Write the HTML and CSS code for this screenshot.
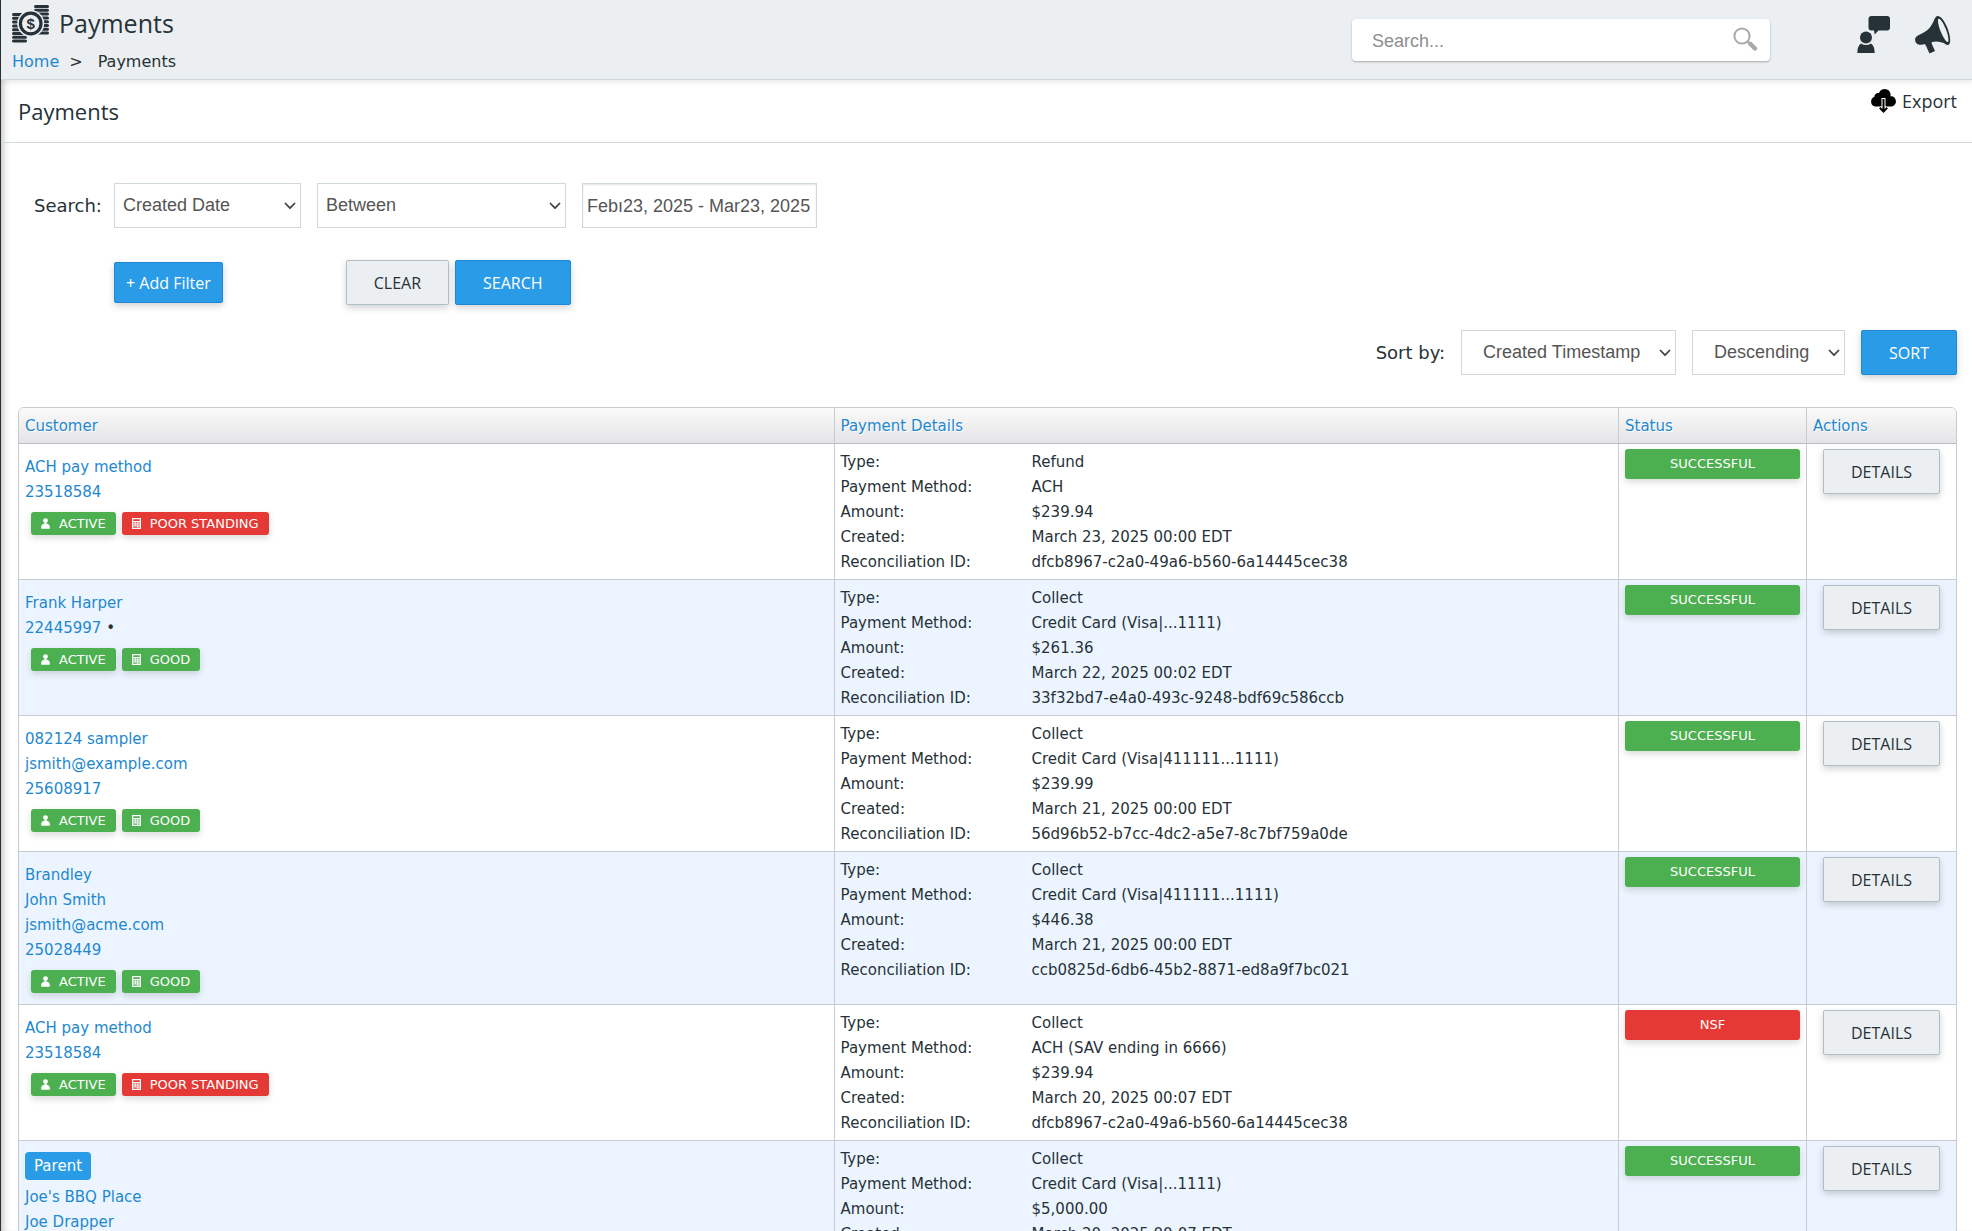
FILE: index.html
```html
<!DOCTYPE html>
<html lang="en">
<head>
    <meta charset="UTF-8">
    <meta name="viewport" content="width=device-width, initial-scale=1.0">
    <title>Payments</title>
    <link rel="stylesheet" href="styles.css">
</head>
<body>
    <!-- Shared icons -->
    <svg class="sprite" aria-hidden="true">
        <symbol id="icon-user" viewBox="0 0 9 11">
            <circle cx="4.5" cy="2.6" r="2.4"/>
            <path d="M3.4 4.5h2.2v1.2c2 .3 3.2 1.400 3.200 3v1.500q0 .6-.6.6H.8q-.6 0-.6-.6V8.700c0-1.600 1.200-2.700 3.200-3z"/>
        </symbol>
        <symbol id="icon-calc" viewBox="0 0 9 11">
            <path fill-rule="evenodd" d="M.5 0h8q.5 0 .5.500v10q0 .5-.5.5h-8q-.5 0-.5-.5V.5Q0 0 .5 0zM1.200 1.200v1.800h6.600V1.200zM1.200 4.200v1.200h1.600V4.200zM3.700 4.200v1.200h1.600V4.200zM6.200 4.200v1.200h1.600V4.200zM1.200 6.400v1.200h1.600V6.400zM3.700 6.400v1.200h1.600V6.400zM6.200 6.400v1.200h1.600V6.400zM1.200 8.600v1.200h4.100V8.600zM6.200 8.600v1.200h1.600V8.600z"/>
        </symbol>
        <symbol id="icon-chevron" viewBox="0 0 12 8">
            <path d="M1.500 1.500 6 6.200l4.500-4.700" fill="none" stroke="#444" stroke-width="1.800" stroke-linecap="round" stroke-linejoin="round"/>
        </symbol>
    </svg>

    <div class="app">
        <header class="header">
            <div class="header-left">
                <div class="page-title">
                    <svg class="title-icon" width="37" height="38" viewBox="0 0 37 38" aria-hidden="true">
                        <g stroke="#263238" stroke-width="3" stroke-linecap="round">
                            <path d="M23.500 1.500h12M23.500 5.300h12M23.500 9.100h12M23.500 12.900h12M23.500 16.700h12M23.500 20.500h12M23.500 24.300h12M23.500 28.100h12"/>
                            <path d="M1.500 9.500h12M1.500 13.300h12M1.500 17.100h12M1.500 20.900h12M1.500 24.700h12M1.500 28.500h12M1.500 32.300h12M1.500 36.100h12"/>
                        </g>
                        <circle cx="18.700" cy="18.500" r="13.500" fill="#eceff1"/>
                        <circle cx="18.700" cy="18.500" r="10.300" fill="none" stroke="#263238" stroke-width="3.200"/>
                        <text class="coin-sign" x="18.700" y="24" text-anchor="middle">$</text>
                    </svg>
                    <h1>Payments</h1>
                </div>
                <nav class="breadcrumb" aria-label="Breadcrumb">
                    <a href="#">Home</a>
                    <span class="separator">&gt;</span>
                    <span>Payments</span>
                </nav>
            </div>
            <div class="header-right">
                <form class="search-box">
                    <input type="search" placeholder="Search..." aria-label="Search">
                    <button type="submit" aria-label="Submit search">
                        <svg width="25" height="25" viewBox="0 0 25 25">
                            <circle cx="9" cy="9" r="7.600" fill="none" stroke="#a9a9a9" stroke-width="2"/>
                            <path d="m14.500 14.500 2.500 2.500" stroke="#a9a9a9" stroke-width="2"/>
                            <path d="m17.200 16.800 4.800 4.700" stroke="#a9a9a9" stroke-width="4.400" stroke-linecap="round"/>
                        </svg>
                    </button>
                </form>
                <div class="header-actions">
                    <a href="#" aria-label="Support chat">
                        <svg width="34" height="38" viewBox="0 0 34 38" fill="#263238">
                            <path d="M14.500 0h15.500q3 0 3 3v8.500q0 3-3 3h-8.500l-3.800 4-.7-4h-2.500q-3 0-3-3V3q0-3 3-3z"/>
                            <circle cx="9" cy="21.500" r="6"/>
                            <path d="M4 27.500q5 3.200 10 0 3.600 2.800 3.600 8.200V37H.4v-1.300q0-5.400 3.600-8.200z"/>
                        </svg>
                    </a>
                    <a href="#" aria-label="Announcements">
                        <svg width="36" height="38" viewBox="0 0 36 38">
                            <path fill="#263238" fill-rule="evenodd" d="M21.800.3c2.600-1.300 6.800 2.900 10 10.200 3.300 7.600 4.800 16.500 1.800 18.200-1 .6-2.300 0-3.700-1-3.300-2-8-3-13-1.800-.5 1-.2 1.800.3 2.800l2.800 6.300-5.500 2.500-3.900-8.500q-.4-1-1.400-.8l-2.900.6C3.500 29.300.2 27.200.1 23.900c-.1-2 1-3.600 2.900-4.400 6.800-3 12.300-6.300 15.700-14.500.8-2 1.600-3.900 3.100-4.700zM23.600 2.800c-1.500.8-.3 7.300 2.400 13.500 2.700 6.100 5.600 10.300 6.900 9.700 1.300-.7.4-7.300-2.300-13.500-2.700-6.300-5.700-10.400-7-9.700z"/>
                        </svg>
                    </a>
                </div>
            </div>
        </header>

        <div class="title-bar">
            <h2>Payments</h2>
            <a class="export" href="#">
                <svg width="25" height="25" viewBox="0 0 25 25" aria-hidden="true">
                    <path d="M6.500 17.500C2.500 18 0 15.500.1 12.400c.1-2.300 1.300-3.800 3.200-4.400.1-2.700 2.200-4.200 4.700-3.900C8.900 1.500 11 0 13.700 0c3.400.1 5.700 2.300 6 5.700-.1.700-.2 1-.5 1.600 3.300-.3 5.600 1.800 5.700 4.900 0 3.300-2.200 5.400-5.600 5.300z"/>
                    <path d="M12.500 9v14M8.500 18.500l4 4.300 4-4.300" fill="none" stroke="#fff" stroke-width="4"/>
                    <path d="M12.500 10v12M8.800 18.800l3.700 3.700 3.700-3.700" fill="none" stroke="#000" stroke-width="2"/>
                </svg>
                Export
            </a>
        </div>

        <main class="content">
            <form class="filters">
                <div class="filter-row">
                    <label class="filter-label" for="filterField">Search:</label>
                    <span class="select filter-field">
                        <select id="filterField"><option>Created Date</option></select>
                        <svg width="12" height="8"><use href="#icon-chevron"/></svg>
                    </span>
                    <span class="select filter-operator">
                        <select aria-label="Operator"><option>Between</option></select>
                        <svg width="12" height="8"><use href="#icon-chevron"/></svg>
                    </span>
                    <input class="date-range" type="text" aria-label="Date range" value="Febı23, 2025 - Mar23, 2025">
                </div>
                <div class="button-row">
                    <button class="btn btn-primary btn-small" type="button">+ Add Filter</button>
                    <div class="button-group">
                        <button class="btn" type="reset">CLEAR</button>
                        <button class="btn btn-primary" type="submit">SEARCH</button>
                    </div>
                </div>
            </form>

            <form class="sort">
                <label for="sortField">Sort by:</label>
                <span class="select sort-field">
                    <select id="sortField"><option>Created Timestamp</option></select>
                    <svg width="12" height="8"><use href="#icon-chevron"/></svg>
                </span>
                <span class="select sort-order">
                    <select aria-label="Sort order"><option>Descending</option></select>
                    <svg width="12" height="8"><use href="#icon-chevron"/></svg>
                </span>
                <button class="btn btn-primary" type="submit">SORT</button>
            </form>

            <table class="payments">
                <thead>
                    <tr>
                        <th class="col-customer"><a href="#">Customer</a></th>
                        <th class="col-details"><a href="#">Payment Details</a></th>
                        <th class="col-status"><a href="#">Status</a></th>
                        <th class="col-actions"><a href="#">Actions</a></th>
                    </tr>
                </thead>
                <tbody>
                    <tr>
                        <td class="customer">
                            <div><a href="#">ACH pay method</a></div>
                            <div><a href="#">23518584</a></div>
                            <div class="badges">
                                <span class="badge green"><svg width="9" height="11"><use href="#icon-user"/></svg>ACTIVE</span>
                                <span class="badge red"><svg width="9" height="11"><use href="#icon-calc"/></svg>POOR STANDING</span>
                            </div>
                        </td>
                        <td class="details">
                            <dl>
                                <dt>Type:</dt><dd>Refund</dd>
                                <dt>Payment Method:</dt><dd>ACH</dd>
                                <dt>Amount:</dt><dd>$239.94</dd>
                                <dt>Created:</dt><dd>March 23, 2025 00:00 EDT</dd>
                                <dt>Reconciliation ID:</dt><dd>dfcb8967-c2a0-49a6-b560-6a14445cec38</dd>
                            </dl>
                        </td>
                        <td><span class="status green">SUCCESSFUL</span></td>
                        <td class="actions"><button class="btn" type="button">DETAILS</button></td>
                    </tr>
                    <tr>
                        <td class="customer">
                            <div><a href="#">Frank Harper</a></div>
                            <div><a href="#">22445997</a> •</div>
                            <div class="badges">
                                <span class="badge green"><svg width="9" height="11"><use href="#icon-user"/></svg>ACTIVE</span>
                                <span class="badge green"><svg width="9" height="11"><use href="#icon-calc"/></svg>GOOD</span>
                            </div>
                        </td>
                        <td class="details">
                            <dl>
                                <dt>Type:</dt><dd>Collect</dd>
                                <dt>Payment Method:</dt><dd>Credit Card (Visa|...1111)</dd>
                                <dt>Amount:</dt><dd>$261.36</dd>
                                <dt>Created:</dt><dd>March 22, 2025 00:02 EDT</dd>
                                <dt>Reconciliation ID:</dt><dd>33f32bd7-e4a0-493c-9248-bdf69c586ccb</dd>
                            </dl>
                        </td>
                        <td><span class="status green">SUCCESSFUL</span></td>
                        <td class="actions"><button class="btn" type="button">DETAILS</button></td>
                    </tr>
                    <tr>
                        <td class="customer">
                            <div><a href="#">082124 sampler</a></div>
                            <div><a href="#">jsmith@example.com</a></div>
                            <div><a href="#">25608917</a></div>
                            <div class="badges">
                                <span class="badge green"><svg width="9" height="11"><use href="#icon-user"/></svg>ACTIVE</span>
                                <span class="badge green"><svg width="9" height="11"><use href="#icon-calc"/></svg>GOOD</span>
                            </div>
                        </td>
                        <td class="details">
                            <dl>
                                <dt>Type:</dt><dd>Collect</dd>
                                <dt>Payment Method:</dt><dd>Credit Card (Visa|411111...1111)</dd>
                                <dt>Amount:</dt><dd>$239.99</dd>
                                <dt>Created:</dt><dd>March 21, 2025 00:00 EDT</dd>
                                <dt>Reconciliation ID:</dt><dd>56d96b52-b7cc-4dc2-a5e7-8c7bf759a0de</dd>
                            </dl>
                        </td>
                        <td><span class="status green">SUCCESSFUL</span></td>
                        <td class="actions"><button class="btn" type="button">DETAILS</button></td>
                    </tr>
                    <tr>
                        <td class="customer">
                            <div><a href="#">Brandley</a></div>
                            <div><a href="#">John Smith</a></div>
                            <div><a href="#">jsmith@acme.com</a></div>
                            <div><a href="#">25028449</a></div>
                            <div class="badges">
                                <span class="badge green"><svg width="9" height="11"><use href="#icon-user"/></svg>ACTIVE</span>
                                <span class="badge green"><svg width="9" height="11"><use href="#icon-calc"/></svg>GOOD</span>
                            </div>
                        </td>
                        <td class="details">
                            <dl>
                                <dt>Type:</dt><dd>Collect</dd>
                                <dt>Payment Method:</dt><dd>Credit Card (Visa|411111...1111)</dd>
                                <dt>Amount:</dt><dd>$446.38</dd>
                                <dt>Created:</dt><dd>March 21, 2025 00:00 EDT</dd>
                                <dt>Reconciliation ID:</dt><dd>ccb0825d-6db6-45b2-8871-ed8a9f7bc021</dd>
                            </dl>
                        </td>
                        <td><span class="status green">SUCCESSFUL</span></td>
                        <td class="actions"><button class="btn" type="button">DETAILS</button></td>
                    </tr>
                    <tr>
                        <td class="customer">
                            <div><a href="#">ACH pay method</a></div>
                            <div><a href="#">23518584</a></div>
                            <div class="badges">
                                <span class="badge green"><svg width="9" height="11"><use href="#icon-user"/></svg>ACTIVE</span>
                                <span class="badge red"><svg width="9" height="11"><use href="#icon-calc"/></svg>POOR STANDING</span>
                            </div>
                        </td>
                        <td class="details">
                            <dl>
                                <dt>Type:</dt><dd>Collect</dd>
                                <dt>Payment Method:</dt><dd>ACH (SAV ending in 6666)</dd>
                                <dt>Amount:</dt><dd>$239.94</dd>
                                <dt>Created:</dt><dd>March 20, 2025 00:07 EDT</dd>
                                <dt>Reconciliation ID:</dt><dd>dfcb8967-c2a0-49a6-b560-6a14445cec38</dd>
                            </dl>
                        </td>
                        <td><span class="status red">NSF</span></td>
                        <td class="actions"><button class="btn" type="button">DETAILS</button></td>
                    </tr>
                    <tr>
                        <td class="customer">
                            <span class="parent">Parent</span>
                            <div><a href="#">Joe's BBQ Place</a></div>
                            <div><a href="#">Joe Drapper</a></div>
                        </td>
                        <td class="details">
                            <dl>
                                <dt>Type:</dt><dd>Collect</dd>
                                <dt>Payment Method:</dt><dd>Credit Card (Visa|...1111)</dd>
                                <dt>Amount:</dt><dd>$5,000.00</dd>
                                <dt>Created:</dt><dd>March 20, 2025 00:07 EDT</dd>
                            </dl>
                        </td>
                        <td><span class="status green">SUCCESSFUL</span></td>
                        <td class="actions"><button class="btn" type="button">DETAILS</button></td>
                    </tr>
                </tbody>
            </table>
        </main>
    </div>
</body>
</html>
```
FILE: styles.css
```css
* {
    box-sizing: border-box;
}

body {
    margin: 0;
    font-family: "DejaVu Sans", Verdana, sans-serif;
    font-size: 15px;
    line-height: 25px;
    color: #263238;
    background: #fff;
}

a {
    color: #1e88cf;
    text-decoration: none;
}

h1,
h2 {
    margin: 0;
    font-family: "Open Sans", sans-serif;
    font-weight: 400;
}

.sprite {
    display: none;
}

/* App shell, the edge of the side menu shows on the left */
.app {
    height: 100vh;
    overflow: hidden;
    border-left: 1px solid #263238;
    box-shadow: inset 7px 0 7px -5px rgba(0, 0, 0, 0.25);
}

/* Header */
.header {
    display: flex;
    justify-content: space-between;
    height: 80px;
    padding: 4px 21px 0 11px;
    background: #eceff1;
    border-bottom: 1px solid #cfd8dc;
    box-shadow: 0 2px 6px rgba(0, 0, 0, 0.1);
}

.page-title {
    display: flex;
    align-items: center;
    gap: 10px;
    height: 40px;
}

.page-title h1 {
    font-size: 25px;
    line-height: 38px;
    padding-bottom: 2px;
}

.coin-sign {
    font-family: "Liberation Sans", Arial, sans-serif;
    font-size: 15px;
    font-weight: 700;
    fill: #263238;
}

.breadcrumb {
    display: flex;
    padding-top: 5px;
    font-size: 16px;
}

.separator {
    padding: 0 15px 0 10px;
}

.header-right {
    display: flex;
    align-items: flex-start;
    gap: 87px;
}

.search-box {
    display: flex;
    align-items: center;
    width: 418px;
    height: 42px;
    margin-top: 15px;
    padding: 0 12px 0 20px;
    background: #fff;
    border-radius: 4px;
    box-shadow: 0 1px 2px rgba(0, 0, 0, 0.3);
}

.search-box input {
    flex: 1;
    min-width: 0;
    padding: 3px 0 0;
    border: none;
    outline: none;
    background: none;
    font-family: "Liberation Sans", Arial, sans-serif;
    font-size: 18px;
}

.search-box input::placeholder {
    color: #8e8e8e;
}

.search-box button {
    display: flex;
    padding: 0 0 2px;
    border: none;
    background: none;
    cursor: pointer;
}

.header-actions {
    display: flex;
    gap: 24px;
    padding-top: 12px;
}

.header-actions svg {
    display: block;
}

/* Title bar */
.title-bar {
    display: flex;
    justify-content: space-between;
    height: 63px;
    padding: 7px 15px 0 17px;
    border-bottom: 1px solid #cfd8dc;
}

.title-bar h2 {
    padding-top: 4px;
    font-size: 22px;
    line-height: 40px;
}

.export {
    display: flex;
    align-items: center;
    gap: 6px;
    height: 28px;
    color: #263238;
    font-family: "Open Sans", sans-serif;
    font-size: 18px;
}

.content {
    padding: 40px 15px 0 17px;
}

/* Filters */
.filters {
    padding-left: 16px;
}

.filter-row {
    display: flex;
    align-items: center;
    gap: 16px;
}

.filter-label {
    width: 64px;
    font-size: 18px;
    white-space: nowrap;
}

.select {
    position: relative;
    display: inline-block;
    height: 45px;
}

.select select,
.date-range {
    width: 100%;
    height: 45px;
    margin: 0;
    border: 1px solid #cfd8dc;
    border-radius: 0;
    outline: none;
    background: #fff;
    color: #555;
    font-family: "Liberation Sans", Arial, sans-serif;
    font-size: 18px;
}

.select select {
    padding: 0 20px 2px 8px;
    appearance: none;
}

/* Chevron over the right end of the select */
.select svg {
    position: absolute;
    top: 19px;
    right: 5px;
    pointer-events: none;
}

.filter-field {
    width: 187px;
}

.filter-operator {
    width: 249px;
}

.date-range {
    width: 235px;
    padding: 2px 4px 0;
    box-shadow: inset 0 1px 2px rgba(0, 0, 0, 0.1);
}

.button-row {
    display: flex;
    align-items: center;
    gap: 123px;
    padding: 32px 0 0 80px;
}

.button-group {
    display: flex;
    gap: 6px;
}

/* Buttons */
.btn {
    height: 45px;
    padding: 0 27px;
    border: 1px solid #b0bec5;
    border-radius: 2px;
    background: #eceff1;
    box-shadow: 0 3px 7px rgba(0, 0, 0, 0.18);
    color: #263238;
    font-family: "Open Sans", sans-serif;
    font-size: 16px;
    cursor: pointer;
}

.btn-primary {
    border-color: #1e88d6;
    background: #2a9be6;
    color: #fff;
}

.btn-small {
    height: 41px;
    padding: 0 11px;
}

/* Sorting */
.sort {
    display: flex;
    align-items: center;
    justify-content: flex-end;
    gap: 16px;
    padding: 25px 0 32px;
}

.sort label {
    font-size: 18px;
}

.sort .select select {
    padding-left: 21px;
}

.sort-field {
    width: 215px;
}

.sort-order {
    width: 153px;
}

/* Payments table */
.payments {
    width: 100%;
    table-layout: fixed;
    border: 1px solid #c7cad1;
    border-radius: 6px 6px 0 0;
    border-spacing: 0;
}

.payments th,
.payments td {
    padding: 5px 6px;
    border-right: 1px solid #c7cad1;
    border-bottom: 1px solid #c7cad1;
    text-align: left;
    vertical-align: top;
}

.payments th {
    padding: 6px 6px 4px;
    background: linear-gradient(#fafafa, #e4e4e7);
    border-bottom-color: #b9bcc4;
    font-weight: 400;
    text-shadow: 1px 1px 0 #fff;
}

.payments th:last-child,
.payments td:last-child {
    border-right: none;
}

.payments th:first-child {
    border-top-left-radius: 5px;
}

.payments th:last-child {
    border-top-right-radius: 5px;
}

.payments tbody tr:nth-child(even) {
    background: #ecf5ff;
}

.col-details {
    width: 40.5%;
}

.col-status {
    width: 188px;
}

.col-actions {
    width: 149px;
}

.payments .customer {
    padding-top: 11px;
}

.payments .details {
    padding: 6px 6px 4px;
}

.payments .actions {
    text-align: center;
}

dl {
    display: grid;
    grid-template-columns: 191px 1fr;
    margin: 0;
}

dd {
    margin: 0;
}

.badges {
    display: flex;
    gap: 6px;
    padding: 7px 6px 6px;
}

.badge,
.status {
    border-radius: 3px;
    box-shadow: 0 3px 7px rgba(0, 0, 0, 0.15);
    color: #fff;
    font-size: 13px;
}

.badge {
    display: flex;
    align-items: center;
    gap: 9px;
    padding: 0 10px;
    line-height: 23px;
}

.badge svg {
    fill: #fff;
}

.status {
    display: block;
    line-height: 30px;
    text-align: center;
}

.green {
    background: #4caf50;
}

.red {
    background: #e53935;
}

.parent {
    display: inline-block;
    margin: 0 0 5px;
    padding: 0 9px;
    border-radius: 4px;
    background: #2a9be6;
    color: #fff;
    line-height: 28px;
}
```
